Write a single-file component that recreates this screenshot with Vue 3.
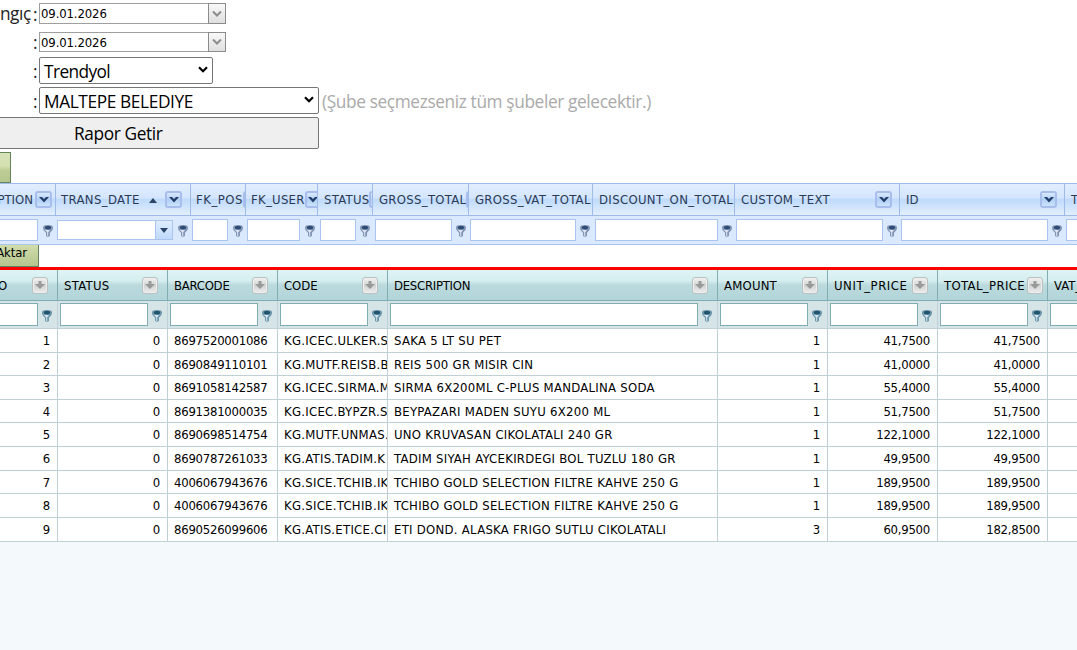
<script setup>
const orders = [
  { title: 'PTION', width: 56, button: true, cut: true, early: true, spacing: 0 },
  { title: 'TRANS_DATE', width: 135, button: true, sorted: true, combo: true, early: true, spacing: 0.36 },
  { title: 'FK_POS', width: 55, button: true, early: true, spacing: 0.5 },
  { title: 'FK_USER', width: 72, button: true, early: true, spacing: 0.27 },
  { title: 'STATUS', width: 55, button: true, nudge: true, spacing: 0.3 },
  { title: 'GROSS_TOTAL', width: 96, button: true, nudge: true, spacing: 0.3 },
  { title: 'GROSS_VAT_TOTAL', width: 124, spacing: 0.3 },
  { title: 'DISCOUNT_ON_TOTAL', width: 142, nudge: true, spacing: 0.34 },
  { title: 'CUSTOM_TEXT', width: 165, button: true, spacing: 0.27 },
  { title: 'ID', width: 165, button: true, spacing: 0 },
  { title: 'T', width: 110, spacing: 0 }
]

const lines = [
  { title: 'O', width: 58, num: true, cut: true, spacing: 0 },
  { title: 'STATUS', width: 110, num: true, spacing: 0.3 },
  { title: 'BARCODE', width: 110, spacing: -0.25 },
  { title: 'CODE', width: 110, text: true, spacing: -0.05 },
  { title: 'DESCRIPTION', width: 330, text: true, spacing: -0.27 },
  { title: 'AMOUNT', width: 110, num: true, spacing: 0.2 },
  { title: 'UNIT_PRICE', width: 110, num: true, spacing: 0.56 },
  { title: 'TOTAL_PRICE', width: 110, num: true, spacing: 0.36 },
  { title: 'VAT_', width: 110, num: true, spacing: 0 }
]

const rows = [
  ['1', '0', '8697520001086', 'KG.ICEC.ULKER.S', 'SAKA 5 LT SU PET', '1', '41,7500', '41,7500', ''],
  ['2', '0', '8690849110101', 'KG.MUTF.REISB.B', 'REIS 500 GR MISIR CIN', '1', '41,0000', '41,0000', ''],
  ['3', '0', '8691058142587', 'KG.ICEC.SIRMA.M', 'SIRMA 6X200ML C-PLUS MANDALINA SODA', '1', '55,4000', '55,4000', ''],
  ['4', '0', '8691381000035', 'KG.ICEC.BYPZR.S', 'BEYPAZARI MADEN SUYU 6X200 ML', '1', '51,7500', '51,7500', ''],
  ['5', '0', '8690698514754', 'KG.MUTF.UNMAS.', 'UNO KRUVASAN CIKOLATALI 240 GR', '1', '122,1000', '122,1000', ''],
  ['6', '0', '8690787261033', 'KG.ATIS.TADIM.K', 'TADIM SIYAH AYCEKIRDEGI BOL TUZLU 180 GR', '1', '49,9500', '49,9500', ''],
  ['7', '0', '4006067943676', 'KG.SICE.TCHIB.IK', 'TCHIBO GOLD SELECTION FILTRE KAHVE 250 G', '1', '189,9500', '189,9500', ''],
  ['8', '0', '4006067943676', 'KG.SICE.TCHIB.IK', 'TCHIBO GOLD SELECTION FILTRE KAHVE 250 G', '1', '189,9500', '189,9500', ''],
  ['9', '0', '8690526099606', 'KG.ATIS.ETICE.CI', 'ETI DOND. ALASKA FRIGO SUTLU CIKOLATALI', '3', '60,9500', '182,8500', '']
]
</script>

<template>
  <div class="page">
    <div class="form">
      <div class="form-row date-row">
        <span class="label">ngıç</span><span class="colon">:</span>
        <div class="date-box">
          <span>09.01.2026</span>
          <i class="date-btn"><svg width="10" height="6" viewBox="0 0 10 6"><path d="M1 .5 5 4.5 9 .5" /></svg></i>
        </div>
      </div>
      <div class="form-row date-row second">
        <span class="label"></span><span class="colon">:</span>
        <div class="date-box">
          <span>09.01.2026</span>
          <i class="date-btn"><svg width="10" height="6" viewBox="0 0 10 6"><path d="M1 .5 5 4.5 9 .5" /></svg></i>
        </div>
      </div>
      <div class="form-row select-row">
        <span class="label"></span><span class="colon">:</span>
        <div class="select small">
          <span>Trendyol</span>
          <svg width="10" height="7" viewBox="0 0 10 7"><path d="M1 1.2 5 5.2 9 1.2" /></svg>
        </div>
      </div>
      <div class="form-row select-row">
        <span class="label"></span><span class="colon">:</span>
        <div class="select">
          <span>MALTEPE BELEDIYE</span>
          <svg width="10" height="7" viewBox="0 0 10 7"><path d="M1 1.2 5 5.2 9 1.2" /></svg>
        </div>
        <span class="hint">(Şube seçmezseniz tüm şubeler gelecektir.)</span>
      </div>
      <div class="report-btn"><span>Rapor Getir</span></div>
    </div>

    <div class="strip">
      <div class="green-btn top"></div>
    </div>

    <div class="grid blue">
      <div class="head">
        <div v-for="c in orders" :key="c.title" class="cell" :class="{ cut: c.cut, sorted: c.sorted, nudge: !c.early }" :style="{ width: c.width + 'px' }">
          <span :style="{ letterSpacing: c.spacing + 'px' }">{{ c.title }}</span>
          <svg v-if="c.sorted" class="sort" width="8" height="5" viewBox="0 0 8 5"><path d="M0 5 4 0 8 5z" /></svg>
          <i v-if="c.button" class="head-btn">
            <svg width="10" height="6" viewBox="0 0 10 6"><path d="M0 0h3l2 2 2-2h3L5 5.5z" fill="#233f69" /></svg>
          </i>
        </div>
      </div>
      <div class="filter">
        <div v-for="c in orders" :key="c.title" class="filter-cell" :class="{ cut: c.cut, early: c.early, nudge: c.nudge }" :style="{ width: c.width + 'px' }">
          <div class="input" :class="{ combo: c.combo }">
            <i v-if="c.combo"><svg width="8" height="5" viewBox="0 0 8 5"><path d="M0 0h8L4 5z" fill="#2b4568" /></svg></i>
          </div>
          <svg class="funnel" width="10" height="12" viewBox="0 0 10 12">
            <path d="M0 2.5C0 5 .8 5.500 3 7.800V11q2 1.600 4 0V7.800C9.200 5.500 10 5 10 2.500z" fill="#8194b3" />
            <path d="M1.500 4.500 4.200 7.300V11h1V7.300L7 5.200z" fill="#dfe8f6" />
            <ellipse cx="5" cy="2.300" rx="5" ry="2.300" fill="#8a9cba" />
            <ellipse cx="5" cy="2.600" rx="3.200" ry="1.900" fill="#2f4c77" />
          </svg>
        </div>
      </div>
    </div>

    <div class="strip low">
      <div class="green-btn export"><span>Aktar</span></div>
    </div>

    <div class="grid teal">
      <div class="head">
        <div v-for="c in lines" :key="c.title" class="cell" :style="{ width: c.width + 'px' }">
          <span :style="{ letterSpacing: c.spacing + 'px' }">{{ c.title }}</span>
          <i class="head-btn">
            <svg width="10" height="8" viewBox="0 0 10 8"><path d="M3.500 0h3v3H10L5 8 0 3h3.500z" fill="#999" /></svg>
          </i>
        </div>
      </div>
      <div class="filter">
        <div v-for="c in lines" :key="c.title" class="filter-cell" :class="{ cut: c.cut }" :style="{ width: c.width + 'px' }">
          <div class="input"></div>
          <svg class="funnel" width="10" height="12" viewBox="0 0 10 12">
            <path d="M0 2.500C0 5 .8 5.500 3 7.800V11q2 1.600 4 0V7.800C9.200 5.500 10 5 10 2.500z" fill="#6c98ad" />
            <path d="M1.500 4.500 4.200 7.300V11h1V7.300L7 5.200z" fill="#d6e8ef" />
            <ellipse cx="5" cy="2.300" rx="5" ry="2.300" fill="#7499aa" />
            <ellipse cx="5" cy="2.600" rx="3.200" ry="1.900" fill="#1f556e" />
          </svg>
        </div>
      </div>
      <div v-for="row in rows" :key="row[0]" class="row">
        <div v-for="(c, i) in lines" :key="c.title" class="data" :class="{ num: c.num, text: c.text }" :style="{ width: c.width + 'px' }">{{ row[i] }}</div>
      </div>
    </div>
  </div>
</template>

<style>
body {
  margin: 0;
  background: #f4f9fc;
}
</style>

<style scoped>
.page {
  width: 1077px;
  height: 650px;
  overflow: hidden;
  display: flex;
  flex-direction: column;
  background: #f4f9fc;
  font-family: "DejaVu Sans Condensed", "DejaVu Sans", sans-serif;
  font-stretch: condensed;
  font-size: 13px;
  letter-spacing: -0.25px;
  color: #000;
}

.page * {
  box-sizing: border-box;
}

.form {
  background: #fff;
  height: 152px;
  padding-top: 3px;
  font-family: "Open Sans", "Noto Sans", sans-serif;
  font-stretch: normal;
  font-size: 17.3px;
  letter-spacing: -0.38px;
  flex: none;
}

.form-row {
  display: flex;
  align-items: center;
  white-space: nowrap;
}

.label {
  width: 33px;
  display: flex;
  justify-content: flex-end;
  padding-right: 2px;
  color: #222;
}

.colon {
  width: 6px;
  padding-top: 1px;
  color: #222;
}

.date-row {
  height: 21px;
}

.date-row.second {
  margin-top: 8px;
  height: 20px;
}

.date-box {
  width: 187px;
  height: 100%;
  border: 1px solid #9f9f9f;
  background: #fff;
  display: flex;
  align-items: center;
  justify-content: space-between;
  padding-left: 1px;
  font-family: "DejaVu Sans Condensed", "DejaVu Sans", sans-serif;
  font-stretch: condensed;
  font-size: 13px;
  letter-spacing: -0.12px;
}

.date-btn {
  width: 18px;
  height: calc(100% + 2px);
  margin-right: -1px;
  border: 1px solid #8b8b8b;
  background: linear-gradient(#f8f8f8, #dfdfdf);
  display: flex;
  align-items: center;
  justify-content: center;
}

.date-btn path {
  fill: none;
  stroke: #8c8c8c;
  stroke-width: 2;
}

.select-row {
  margin-top: 3px;
  height: 27px;
}

.second + .select-row {
  margin-top: 5px;
}

.select {
  width: 280px;
  height: 27px;
  border: 1px solid #767676;
  border-radius: 2px;
  background: #fff;
  display: flex;
  align-items: center;
  justify-content: space-between;
  padding: 2px 4px 0;
}

.select.small {
  width: 174px;
}

.select.small span {
  letter-spacing: -0.6px;
}

.select path {
  fill: none;
  stroke: #000;
  stroke-width: 2.2;
}

.select svg {
  margin-top: -4px;
}

.hint {
  color: #aaa;
  margin-left: 3px;
  padding-top: 2px;
}

.report-btn {
  width: 321px;
  height: 32px;
  margin: 3px 0 0 -2px;
  border: 1px solid #767676;
  border-radius: 2px;
  background: #efefef;
  display: flex;
  align-items: center;
  padding-left: 75px;
}

.strip {
  flex: none;
  height: 31px;
  background: #fff;
}

.strip.low {
  height: 22px;
}

.green-btn {
  border: 1px solid #64845a;
  border-left: 0;
  background: linear-gradient(#d8e3b8 0, #d4e0b0 45%, #bccc92 60%, #b6c690);
}

.green-btn.top {
  width: 11px;
  height: 31px;
}

.green-btn.export {
  width: 39px;
  height: 22px;
  border-top: 0;
  display: flex;
  justify-content: flex-end;
  padding-right: 11px;
  line-height: 16px;
  letter-spacing: -0.1px;
  background: linear-gradient(#d0dcaa, #b6c690);
}

.grid {
  display: flex;
  flex-direction: column;
  flex: none;
  background: #fff;
}

.head,
.filter,
.row {
  display: flex;
  overflow: hidden;
}

.cell {
  flex: none;
  display: flex;
  align-items: center;
  justify-content: space-between;
  overflow: hidden;
  white-space: nowrap;
  padding: 0 7px 0 5px;
  border-right: 1px solid #9ebbe9;
}

.cell.nudge {
  padding-left: 6px;
}

.cell.sorted {
  padding-right: 8px;
}

.cell span {
  flex: none;
}

.cell.cut {
  justify-content: flex-end;
  padding-right: 3px;
}

.cell.cut span {
  margin-right: 2px;
}

.blue .head {
  height: 33px;
  color: #2a3a55;
  border-top: 1px solid #9ebbe9;
  border-bottom: 1px solid #9ebbe9;
  background: linear-gradient(#e2eefe 0, #d3e5fe 45%, #bfdafb 50%, #e2effe 100%);
}

.sort {
  margin-left: auto;
  margin-right: 8px;
  margin-top: 2px;
  fill: #2b4568;
}

.head-btn {
  flex: none;
  width: 17px;
  height: 17px;
  border-radius: 3px;
  display: flex;
  align-items: center;
  justify-content: center;
}

.blue .head-btn {
  border: 2px solid #a9bdec;
  background: linear-gradient(#dbe9fc, #b0cff5 50%, #cbe4fd);
}

.filter-cell {
  flex: none;
  display: flex;
  align-items: center;
  padding: 0 3px 0 1px;
}

.blue .nudge.filter-cell {
  padding-left: 2px;
}

.input {
  flex: 1;
  height: 22px;
  border: 1px solid #a9c4ee;
  background: #fff;
}

.input.combo {
  height: 20px;
  display: flex;
  justify-content: flex-end;
}

.input.combo i {
  width: 17px;
  border-left: 1px solid #a9c4ee;
  background: linear-gradient(#e0edfe, #bfdafb);
  display: flex;
  align-items: center;
  justify-content: center;
}

.funnel {
  flex: none;
  margin-left: 4px;
  margin-top: 2px;
}

.early .funnel {
  margin-left: 5px;
}

.blue .filter {
  height: 29px;
  background: #dae9fe;
  border-bottom: 1px solid #a9c4ee;
}

.teal {
  border-top: 3px solid #f00;
}

.teal .head {
  height: 31px;
  border-bottom: 1px solid #7fadb1;
  background: linear-gradient(#dff4f5 0, #d6eeef 35%, #bbdadd 50%, #b2d5d9 100%);
}

.teal .cell {
  border-color: #7fadb1;
  padding: 0 9px 0 6px;
}

.teal .cell:first-child {
  padding-left: 0;
}

.teal .cell:first-child span {
  margin-left: -2px;
}

.teal .head-btn {
  width: 16px;
  border: 1px solid #b9c1c1;
  box-shadow: inset 0 0 0 1px #eee;
  background: linear-gradient(#f2f2f2, #d3d5d5 50%, #ebebeb);
}

/* long titles push the button towards the cell edge */
.teal .cell:nth-child(8) {
  padding-right: 4px;
}

.teal .filter {
  height: 28px;
  background: #d5e4e7;
  border-bottom: 1px solid #bfd0d6;
}

.teal .filter-cell {
  border-right: 1px solid #bfd0d6;
  padding-left: 2px;
  padding-right: 5px;
}

.teal .input {
  height: 23px;
  border-color: #7fadb1;
}

.filter .filter-cell.cut {
  padding-left: 0;
}

.filter-cell.cut .input {
  border-left: 0;
}

.row {
  height: 23.6px;
  border-bottom: 1px solid #bfd0d6;
  background: #fff;
}

.row:last-child {
  height: 24.2px;
}

.data {
  flex: none;
  padding: 0 0 0 6px;
  border-right: 1px solid #bfd0d6;
  line-height: 23px;
  overflow: hidden;
  white-space: nowrap;
}

.data.text {
  letter-spacing: 0.27px;
}

.data.num {
  padding: 0 7px 0 0;
  text-align: right;
}
</style>
